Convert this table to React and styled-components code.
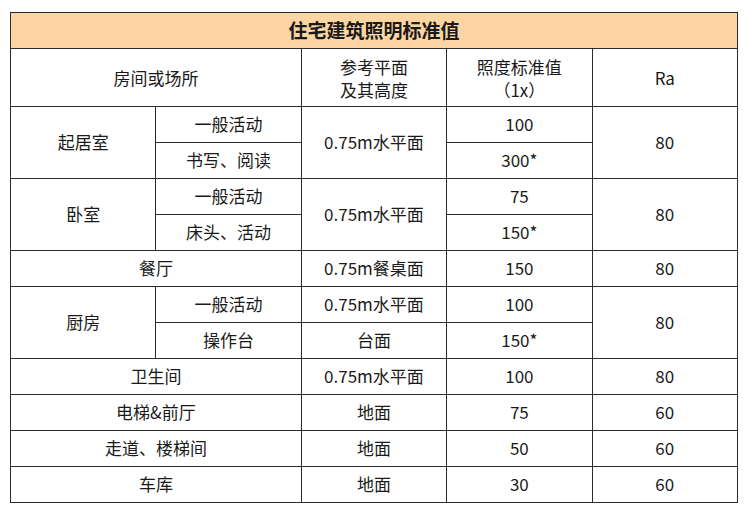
import styled, { createGlobalStyle } from 'styled-components'

const GlobalStyle = createGlobalStyle`
  body {
    margin: 0;
    background: #fff;
    font-family: "Noto Sans CJK SC", "Noto Sans", sans-serif;
    color: #1a1a1a;
  }
`

const Page = styled.div`
  padding: 12px 0 0 10px;
`

const Table = styled.table`
  width: 728px;
  border-collapse: collapse;
  table-layout: fixed;
  font-size: 17px;
  line-height: 23px;
`

const Title = styled.th`
  height: 33px;
  padding: 0 0 2px;
  background: #fdd5a2;
  border: 1px solid #2b2b2b;
  font-size: 19px;
  font-weight: 700;
  text-align: center;
  vertical-align: middle;
`

// cell height excludes padding, so the lift is taken off the height
const Cell = styled.td`
  height: ${(p) => (p.$head ? 57 : 32)}px;
  padding: 0 0 ${(p) => (p.$head ? 0 : 3)}px;
  border: 1px solid #2b2b2b;
  text-align: center;
  vertical-align: middle;
  white-space: nowrap;
`

const rows = [
  { room: '起居室', subs: [['一般活动', '100'], ['书写、阅读', '300*']], plane: '0.75m水平面', ra: '80' },
  { room: '卧室', subs: [['一般活动', '75'], ['床头、活动', '150*']], plane: '0.75m水平面', ra: '80' },
  { room: '餐厅', value: '150', plane: '0.75m餐桌面', ra: '80' },
  { room: '厨房', subs: [['一般活动', '100', '0.75m水平面'], ['操作台', '150*', '台面']], ra: '80' },
  { room: '卫生间', value: '100', plane: '0.75m水平面', ra: '80' },
  { room: '电梯&前厅', value: '75', plane: '地面', ra: '60' },
  { room: '走道、楼梯间', value: '50', plane: '地面', ra: '60' },
  { room: '车库', value: '30', plane: '地面', ra: '60' },
]

function Group({ row }) {
  if (!row.subs) {
    return (
      <tr>
        <Cell colSpan={2}>{row.room}</Cell>
        <Cell>{row.plane}</Cell>
        <Cell>{row.value}</Cell>
        <Cell>{row.ra}</Cell>
      </tr>
    )
  }
  const [first, second] = row.subs
  const splitPlane = !row.plane
  return (
    <>
      <tr>
        <Cell rowSpan={2}>{row.room}</Cell>
        <Cell>{first[0]}</Cell>
        <Cell rowSpan={splitPlane ? 1 : 2}>{splitPlane ? first[2] : row.plane}</Cell>
        <Cell>{first[1]}</Cell>
        <Cell rowSpan={2}>{row.ra}</Cell>
      </tr>
      <tr>
        <Cell>{second[0]}</Cell>
        {splitPlane && <Cell>{second[2]}</Cell>}
        <Cell>{second[1]}</Cell>
      </tr>
    </>
  )
}

export default function App() {
  return (
    <Page>
      <GlobalStyle />
      <Table>
        <tbody>
          <tr>
            <Title colSpan={5}>住宅建筑照明标准值</Title>
          </tr>
          <tr>
            <Cell colSpan={2} $head>房间或场所</Cell>
            <Cell $head>参考平面<br />及其高度</Cell>
            <Cell $head>照度标准值<br />（1x）</Cell>
            <Cell $head>Ra</Cell>
          </tr>
          {rows.map((row) => (
            <Group key={row.room} row={row} />
          ))}
        </tbody>
      </Table>
    </Page>
  )
}
